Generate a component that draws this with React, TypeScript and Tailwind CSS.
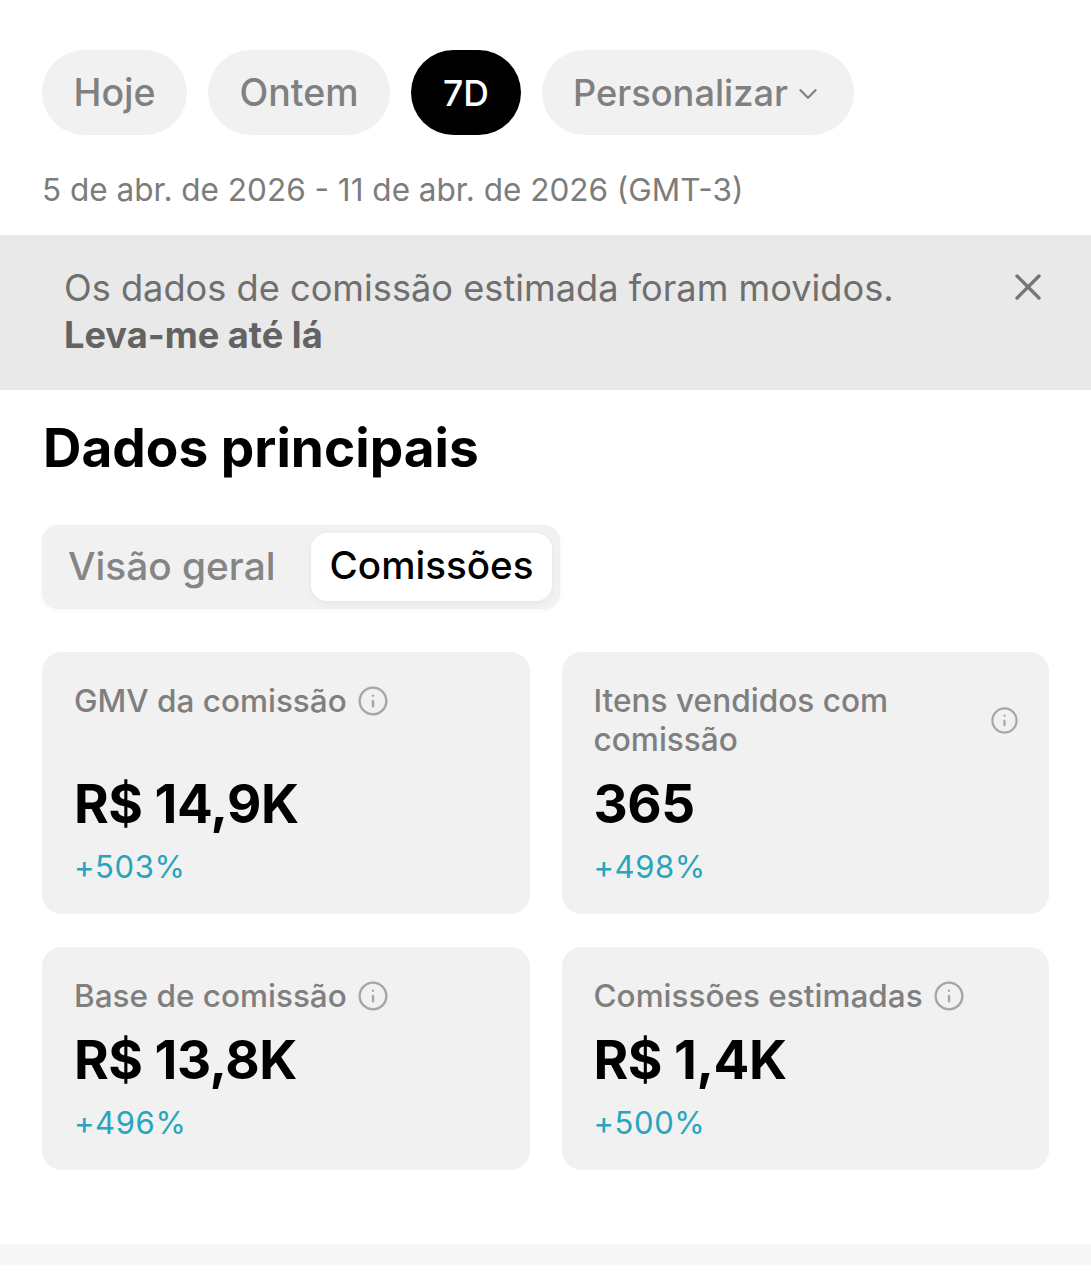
import { ChevronDown, Info, X } from 'lucide-react'

type Metric = {
  label: string
  value: string
  change: string
}

const topMetrics: Metric[] = [
  { label: 'GMV da comissão', value: 'R$ 14,9K', change: '+503%' },
  { label: 'Itens vendidos com comissão', value: '365', change: '+498%' },
]

const bottomMetrics: Metric[] = [
  { label: 'Base de comissão', value: 'R$ 13,8K', change: '+496%' },
  { label: 'Comissões estimadas', value: 'R$ 1,4K', change: '+500%' },
]

function Pill({ label, className }: { label: string; className: string }) {
  return (
    <button className={`h-[85px] rounded-full bg-[#f1f1f1] pt-[2px] text-[37.5px] font-medium text-[#808080] ${className}`}>
      {label}
    </button>
  )
}

function MetricCard({ metric, tall }: { metric: Metric; tall: boolean }) {
  const wraps = metric.label.length > 22
  return (
    <div className={`rounded-[20px] bg-[#f1f1f1] pl-[32px] pr-[30px] ${tall ? 'h-[262px] pt-[29px]' : 'h-[223px] pt-[29px]'}`}>
      <div className={tall ? 'h-[78px]' : 'h-[39px]'}>
        {wraps ? (
          <div className="flex h-full items-center justify-between">
            <span className="w-[340px] text-[31.6px] font-medium leading-[39px] text-[#7f7f7f]">{metric.label}</span>
            <Info className="h-[29px] w-[29px] shrink-0 text-[#a6a6a6]" strokeWidth={1.8} />
          </div>
        ) : (
          <div className="flex h-[39px] items-center gap-[10px]">
            <span className="text-[31.5px] font-medium leading-[39px] text-[#7f7f7f]">{metric.label}</span>
            <Info className="h-[32px] w-[32px] shrink-0 text-[#a6a6a6]" strokeWidth={1.8} />
          </div>
        )}
      </div>
      <div className="mt-[14px] text-[53px] font-bold leading-[62px] tracking-[-0.5px] text-black">{metric.value}</div>
      <div className="mt-[13px] text-[31px] leading-[38px] tracking-[0.6px] text-[#27a5bd]">{metric.change}</div>
    </div>
  )
}

export default function App() {
  return (
    <div className="h-[1280px] overflow-hidden bg-white font-['Inter',sans-serif]">
      <div className="px-[42px] pt-[50px]">
        <div className="flex gap-[21px]">
          <Pill label="Hoje" className="w-[145px]" />
          <Pill label="Ontem" className="w-[182px]" />
          <button className="h-[85px] w-[110px] rounded-full bg-black pt-[2px] text-[35.5px] font-medium text-white">7D</button>
          <button className="flex h-[85px] w-[312px] items-center justify-center gap-[5px] rounded-full bg-[#f1f1f1] pt-[2px] text-[36.2px] font-medium text-[#808080]">
            Personalizar
            <ChevronDown className="h-[30px] w-[30px]" strokeWidth={1.8} />
          </button>
        </div>
        <p className="mt-[35px] text-[31.5px] leading-[40px] text-[#7c7c7c]">
          5 de abr. de 2026 - 11 de abr. de 2026 (GMT-3)
        </p>
      </div>

      <div className="mt-[25px] flex h-[155px] items-start justify-between bg-[#e9e9e9] pl-[64px] pr-[41px] pt-[30px]">
        <div className="text-[36.2px] leading-[47px] text-[#6f6f6f]">
          <p>Os dados de comissão estimada foram movidos.</p>
          <p className="font-bold text-[#636363]">Leva-me até lá</p>
        </div>
        <X className="h-[44px] w-[44px] text-[#767676]" strokeWidth={1.8} />
      </div>

      <div className="px-[42px]">
        <h2 className="mt-[27px] pl-px text-[53.2px] font-bold leading-[62px] text-black">Dados principais</h2>

        <div className="mt-[46px] flex h-[84px] w-[518px] items-center rounded-[16px] bg-[#f1f1f1] pr-[8px] shadow-[0_2px_5px_rgba(0,0,0,0.03)]">
          <span className="w-[269px] pb-[2px] pl-[26px] text-[38.8px] font-medium text-[#858585]">Visão geral</span>
          <span className="flex h-[68px] w-[241px] items-center justify-center rounded-[16px] bg-white pb-[2px] text-[38.6px] font-medium text-black shadow-[0_2px_6px_rgba(0,0,0,0.05)]">
            Comissões
          </span>
        </div>

        <div className="mt-[43px] grid grid-cols-[487.5px_487.5px] gap-x-[32px]">
          {topMetrics.map((metric) => (
            <MetricCard key={metric.label} metric={metric} tall />
          ))}
        </div>
        <div className="mt-[33px] grid grid-cols-[487.5px_487.5px] gap-x-[32px]">
          {bottomMetrics.map((metric) => (
            <MetricCard key={metric.label} metric={metric} tall={false} />
          ))}
        </div>
      </div>

      <div className="mt-[74px] h-[21px] bg-[#f7f7f7]" />
    </div>
  )
}
